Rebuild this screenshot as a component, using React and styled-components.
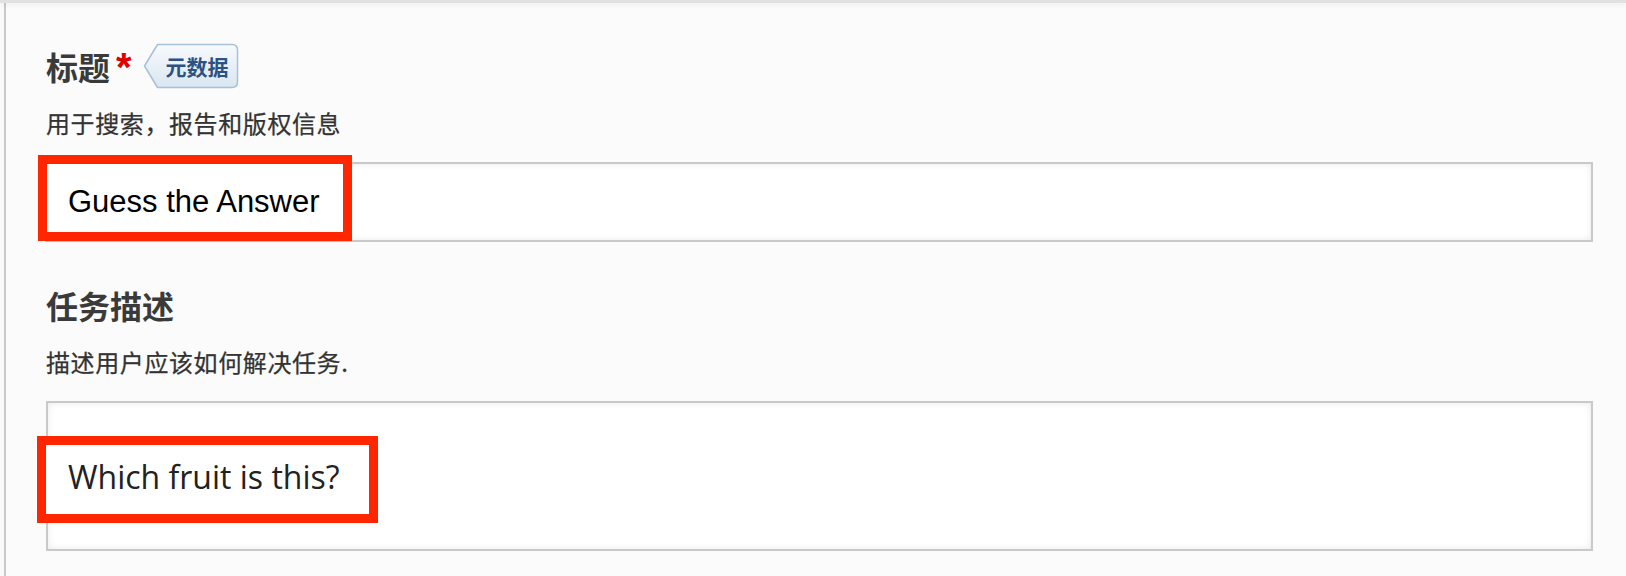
import React from 'react'
import styled, { createGlobalStyle } from 'styled-components'

const GlobalStyle = createGlobalStyle`
  html, body {
    margin: 0;
    padding: 0;
    background: #fafafa;
  }

  body {
    font-family: "Noto Sans CJK SC", "Noto Sans", sans-serif;
    color: #333;
  }
`

const TopRule = styled.div`
  position: relative;
  z-index: 1;
  height: 3px;
  background: #e1e1e1;
  box-shadow: 0 2px 5px rgba(0, 0, 0, 0.07);
`

const Panel = styled.section`
  margin-left: 4px;
  min-height: calc(100vh - 3px);
  box-sizing: border-box;
  border-left: 2px solid #c9c9c9;
  background: #fbfbfb;
  padding: 40px 33px 20px 40px;
`

const Field = styled.div`
  display: flex;
  flex-direction: column;
  margin-bottom: 40px;

  &:last-child {
    margin-bottom: 0;
  }
`

const LabelRow = styled.div`
  display: flex;
  align-items: center;
  min-height: 46px;
`

const Label = styled.h2`
  margin: 0;
  font-size: 32px;
  line-height: 40px;
  font-weight: 700;
  color: #3a3a3a;
`

const Required = styled.span`
  align-self: flex-start;
  margin: 4px 0 0 6px;
  font-family: "Liberation Sans", Arial, sans-serif;
  font-size: 40px;
  line-height: 40px;
  font-weight: 700;
  color: #e00000;
`

const Badge = styled.span`
  position: relative;
  display: inline-flex;
  align-items: center;
  box-sizing: border-box;
  width: 96px;
  height: 46px;
  margin-left: 11px;
  padding-left: 23px;
  font-size: 21px;
  font-weight: 700;
  color: #2b5283;

  svg {
    position: absolute;
    inset: 0;
  }

  span {
    position: relative;
  }
`

const Hint = styled.p`
  margin: 18px 0 0;
  font-size: 24px;
  line-height: 32px;
  font-weight: 400;
  letter-spacing: 0.6px;
  color: #333;
  -webkit-text-stroke: 0.25px #333;
`

const InputBox = styled.div`
  box-sizing: border-box;
  height: ${(p) => p.$height}px;
  margin-top: 23px;
  margin-left: ${(p) => p.$shift || 0}px;
  background: #fff;
  border: 2px solid #c9c9c9;
  box-shadow: inset 0 0 7px rgba(0, 0, 0, 0.09);
`

const Marked = styled.div`
  box-sizing: border-box;
  width: ${(p) => p.$w}px;
  height: ${(p) => p.$h}px;
  margin: ${(p) => p.$top}px 0 0 ${(p) => p.$left}px;
  padding: ${(p) => p.$padTop}px 0 0 ${(p) => p.$padLeft}px;
  border: 9px solid #ff2600;
  background: #fff;
`

const TitleValue = styled.span`
  font-family: "Liberation Sans", Arial, sans-serif;
  font-size: 31px;
  line-height: 36px;
  color: #000;
`

const DescValue = styled.span`
  font-family: "Open Sans", "Noto Sans", sans-serif;
  font-size: 32px;
  line-height: 44px;
  color: #222;
`

const TagShape = () => (
  <svg width='96' height='46' viewBox='0 0 96 46'>
    <defs>
      <linearGradient id='tagFill' x1='0' y1='0' x2='0' y2='1'>
        <stop offset='0' stopColor='#f7fafd' />
        <stop offset='1' stopColor='#d9e6f1' />
      </linearGradient>
    </defs>
    <path
      d='M1.5 23 L14.5 1.5 L89 1.5 Q94.5 1.5 94.5 7 L94.5 39 Q94.5 44.5 89 44.5 L14.5 44.5 Z'
      fill='url(#tagFill)'
      stroke='#a9c1d8'
      strokeWidth='1.5'
      strokeLinejoin='round'
    />
  </svg>
)

const App = () => (
  <>
    <GlobalStyle />
    <TopRule />
    <Panel>
      <Field>
        <LabelRow>
          <Label>标题</Label>
          <Required>*</Required>
          <Badge>
            <TagShape />
            <span>元数据</span>
          </Badge>
        </LabelRow>
        <Hint>用于搜索，报告和版权信息</Hint>
        <InputBox $height={80} $shift={-1}>
          <Marked $w={314} $h={86} $top={-9} $left={-9} $padTop={20} $padLeft={21}>
            <TitleValue>Guess the Answer</TitleValue>
          </Marked>
        </InputBox>
      </Field>

      <Field>
        <LabelRow>
          <Label>任务描述</Label>
        </LabelRow>
        <Hint>描述用户应该如何解决任务.</Hint>
        <InputBox $height={150}>
          <Marked $w={341} $h={87} $top={33} $left={-11} $padTop={10} $padLeft={22}>
            <DescValue>Which fruit is this?</DescValue>
          </Marked>
        </InputBox>
      </Field>
    </Panel>
  </>
)

export default App
